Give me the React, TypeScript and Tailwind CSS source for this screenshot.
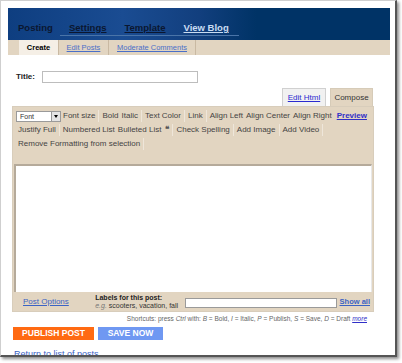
import React from 'react';

const font = { fontFamily: '"Liberation Sans", Arial, sans-serif' };

const Sep = () => <span className="mx-[3px] h-[12px] w-px bg-[#eee6da]" />;

const Tool = ({ label }: { label: string }) => (
  <span className="whitespace-nowrap text-[8px] leading-[12px] text-[#444]">{label}</span>
);

const App: React.FC = () => {
  return (
    <div className="w-[402px] h-[363px] bg-white" style={font}>
      <div className="relative w-[397px] h-[357px] overflow-hidden border-l border-t border-[#cfcfcf] border-r-2 border-b-2 border-r-[#555] border-b-[#555] bg-white shadow-[2px_2px_3px_rgba(0,0,0,0.45)]">
        <div className="pl-[7px] pt-[7px] pr-[5px]">
          {/* Header */}
          <div className="h-[32px] bg-[linear-gradient(90deg,#0e3e80_0%,#1a4c92_30%,#123f7e_50%,#003366_65%,#003366_100%)] flex items-start pt-[13px] pl-[10px]">
            <span className="text-[9.5px] font-bold text-[#0b1730] leading-[13px] w-[42px]">Posting</span>
            <div className="flex gap-[18px] border-b border-[#4a74a8] pb-[1px] pl-[9px] pr-[10px]">
              <span className="text-[9.5px] font-bold text-[#0b1730] leading-[13px] underline">Settings</span>
              <span className="text-[9.5px] font-bold text-[#0b1730] leading-[13px] underline">Template</span>
              <span className="text-[9.5px] font-bold text-[#c9dcf2] leading-[13px] underline">View Blog</span>
            </div>
          </div>
          {/* Sub nav */}
          <div className="h-[15px] bg-[#e2d5c1] flex items-stretch pl-[11px]">
            <span className="w-[40px] bg-[#f5efe6] border-r border-[#c9b9a2] flex items-center justify-center text-[7.5px] font-bold text-black">Create</span>
            <span className="w-[50px] border-r border-[#c9b9a2] flex items-center justify-center text-[7.5px] text-[#4a6fc8] underline">Edit Posts</span>
            <span className="w-[87px] border-r border-[#c9b9a2] flex items-center justify-center text-[7.5px] text-[#4a6fc8] underline">Moderate Comments</span>
          </div>

          {/* Title */}
          <div className="mt-[16px] flex items-center pl-[8px]">
            <span className="text-[8px] font-bold text-[#222] w-[26px]">Title:</span>
            <div className="w-[156px] h-[12px] border border-[#bdbdbd] bg-white" />
          </div>

          {/* Tabs */}
          <div className="mt-[5px] flex justify-end pr-[17px] gap-[4px]">
            <div className="w-[44px] h-[18px] bg-[#f1f1f1] border border-[#d0d0d0] border-b-0 flex items-center justify-center">
              <span className="text-[8px] text-[#2a2ad0] underline">Edit Html</span>
            </div>
            <div className="w-[43px] h-[18px] bg-[#e2d5c1] border border-[#d6cbb8] border-b-0 flex items-center justify-center">
              <span className="text-[8px] text-[#333]">Compose</span>
            </div>
          </div>

          {/* Editor panel */}
          <div className="ml-[4px] w-[362px] bg-[#e2d5c1] border border-[#d8cdbb]">
            <div className="h-[57px] px-[3px] pt-[3px] flex flex-col gap-[2px]">
              <div className="flex items-center">
                <div className="w-[45px] h-[11px] bg-white border border-[#9a9a9a] flex items-center justify-between pl-[3px]">
                  <span className="text-[7px] text-[#333] leading-[9px]">Font</span>
                  <span className="w-[9px] h-[9px] bg-[#e4e4e4] border-l border-[#999] flex items-center justify-center">
                    <span className="w-0 h-0 border-l-[2px] border-r-[2px] border-t-[3px] border-l-transparent border-r-transparent border-t-black" />
                  </span>
                </div>
                <span className="ml-[2px]" />
                <Tool label="Font size" />
                <Sep />
                <Tool label="Bold" />
                <span className="w-[3px]" />
                <Tool label="Italic" />
                <Sep />
                <Tool label="Text Color" />
                <Sep />
                <Tool label="Link" />
                <Sep />
                <Tool label="Align Left" />
                <span className="w-[3px]" />
                <Tool label="Align Center" />
                <span className="w-[3px]" />
                <Tool label="Align Right" />
                <span className="ml-[5px] whitespace-nowrap text-[8px] leading-[12px] font-bold text-[#3030c8] underline">Preview</span>
              </div>
              <div className="flex items-center pl-[2px]">
                <Tool label="Justify Full" />
                <Sep />
                <Tool label="Numbered List" />
                <span className="w-[3px]" />
                <Tool label="Bulleted List" />
                <span className="ml-[4px] text-[8px] leading-[12px] font-bold text-[#555]">❝</span>
                <Sep />
                <Tool label="Check Spelling" />
                <Sep />
                <Tool label="Add Image" />
                <Sep />
                <Tool label="Add Video" />
                <Sep />
              </div>
              <div className="flex items-center pl-[2px]">
                <Tool label="Remove Formatting from selection" />
                <Sep />
              </div>
            </div>
            <div className="mx-[1px] h-[128px] bg-white border-t-2 border-l-2 border-[#b5aa9a] border-r border-r-[#e8e8e8]" />
            <div className="h-[19px] flex items-center pl-[10px] pr-[3px]">
              <span className="w-[73px] text-[8px] text-[#3b63c4] underline">Post Options</span>
              <div className="flex flex-col leading-[8px] w-[91px]">
                <span className="text-[7px] font-bold text-[#222]">Labels for this post:</span>
                <span className="text-[7px] text-[#333] whitespace-nowrap">
                  <span className="italic text-[#777]">e.g.</span> scooters, vacation, fall
                </span>
              </div>
              <div className="w-[153px] h-[10px] mt-[2px] bg-white border border-[#9a9a9a]" />
              <span className="ml-[3px] mt-[1px] text-[7.5px] font-bold text-[#3b63c4] underline whitespace-nowrap">Show all</span>
            </div>
          </div>

          {/* Shortcuts */}
          <div className="mt-[2px] pr-[23px] flex justify-end">
            <span className="text-[6.5px] leading-[10px] text-[#666] whitespace-nowrap">
              Shortcuts: press <i>Ctrl</i> with: <i>B</i> = Bold, <i>I</i> = Italic, <i>P</i> = Publish, <i>S</i> = Save, <i>D</i> = Draft{' '}
              <span className="text-[#3030c8] underline italic">more</span>
            </span>
          </div>

          {/* Buttons */}
          <div className="mt-[3px] ml-[5px] flex gap-[4px]">
            <span className="w-[81px] h-[13px] bg-[#ff6a12] flex items-center justify-center text-[8.5px] font-bold text-white">PUBLISH POST</span>
            <span className="w-[65px] h-[13px] bg-[#6f98f2] flex items-center justify-center text-[8.5px] font-bold text-white">SAVE NOW</span>
          </div>
          <div className="mt-[8px] ml-[6px] text-[9px] leading-[12px] text-[#3b63c4] underline">Return to list of posts</div>
        </div>
      </div>
    </div>
  );
};

export default App;
